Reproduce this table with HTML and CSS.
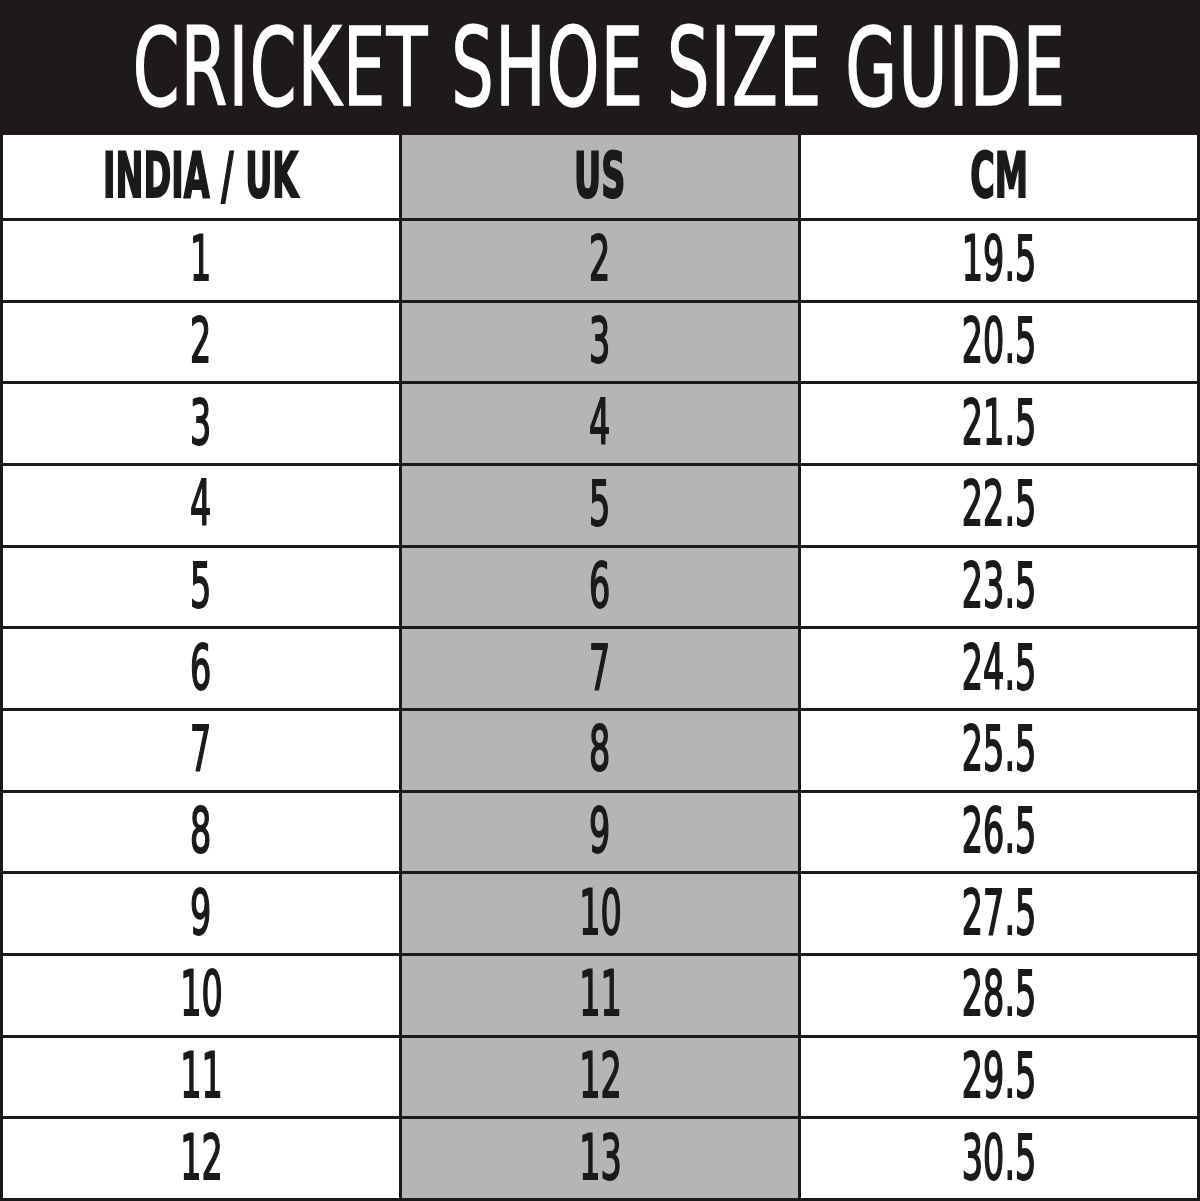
FILE: index.html
```html
<!DOCTYPE html>
<html lang="en">
<head>
<meta charset="utf-8">
<title>Cricket Shoe Size Guide</title>
<link rel="stylesheet" href="styles.css">
</head>
<body>
<div class="sheet">
  <header class="title-bar"><h1 class="title"><span class="squeeze-title">CRICKET SHOE SIZE GUIDE</span></h1></header>
  <div class="grid">
    <div class="cell head"><span class="sq">INDIA / UK</span></div>
    <div class="cell head grey"><span class="sq">US</span></div>
    <div class="cell head"><span class="sq">CM</span></div>

    <div class="cell"><span class="sq">1</span></div><div class="cell grey"><span class="sq">2</span></div><div class="cell"><span class="sq">19.5</span></div>
    <div class="cell"><span class="sq">2</span></div><div class="cell grey"><span class="sq">3</span></div><div class="cell"><span class="sq">20.5</span></div>
    <div class="cell"><span class="sq">3</span></div><div class="cell grey"><span class="sq">4</span></div><div class="cell"><span class="sq">21.5</span></div>
    <div class="cell"><span class="sq">4</span></div><div class="cell grey"><span class="sq">5</span></div><div class="cell"><span class="sq">22.5</span></div>
    <div class="cell"><span class="sq">5</span></div><div class="cell grey"><span class="sq">6</span></div><div class="cell"><span class="sq">23.5</span></div>
    <div class="cell"><span class="sq">6</span></div><div class="cell grey"><span class="sq">7</span></div><div class="cell"><span class="sq">24.5</span></div>
    <div class="cell"><span class="sq">7</span></div><div class="cell grey"><span class="sq">8</span></div><div class="cell"><span class="sq">25.5</span></div>
    <div class="cell"><span class="sq">8</span></div><div class="cell grey"><span class="sq">9</span></div><div class="cell"><span class="sq">26.5</span></div>
    <div class="cell"><span class="sq">9</span></div><div class="cell grey"><span class="sq">10</span></div><div class="cell"><span class="sq">27.5</span></div>
    <div class="cell"><span class="sq">10</span></div><div class="cell grey"><span class="sq">11</span></div><div class="cell"><span class="sq">28.5</span></div>
    <div class="cell"><span class="sq">11</span></div><div class="cell grey"><span class="sq">12</span></div><div class="cell"><span class="sq">29.5</span></div>
    <div class="cell"><span class="sq">12</span></div><div class="cell grey"><span class="sq">13</span></div><div class="cell"><span class="sq">30.5</span></div>
  </div>
</div>
</body>
</html>
```
FILE: styles.css
```css
html, body {
  margin: 0;
  padding: 0;
  background: #ffffff;
}

.sheet {
  width: 1200px;
  height: 1201px;
  box-sizing: border-box;
  border: 3px solid #1c1a19;
  border-top: 0;
  display: flex;
  flex-direction: column;
  overflow: hidden;
  font-family: "DejaVu Sans", sans-serif;
  font-stretch: condensed;
  color: #1a1a1a;
}

.title-bar {
  height: 135px;
  flex: none;
  background: #1e1a19;
  display: flex;
  align-items: center;
  justify-content: center;
  overflow: hidden;
}

.title {
  margin: 0;
  color: #ffffff;
  font-size: 108px;
  font-weight: normal;
  line-height: 1;
  letter-spacing: 2px;
  -webkit-text-stroke: 1.5px #ffffff;
  max-width: 1194px;
  display: flex;
  justify-content: center;
}

.squeeze-title {
  display: inline-block;
  flex: none;
  transform: scaleX(0.688);
  white-space: nowrap;
}

.grid {
  flex: 1;
  display: grid;
  grid-template-columns: repeat(3, 1fr);
  grid-template-rows: 83px repeat(12, 1fr);
  gap: 3px;
  background: #1c1a19;
}

.cell {
  background: #ffffff;
  display: flex;
  align-items: center;
  justify-content: center;
  font-size: 62px;
  font-weight: normal;
  line-height: 1;
  padding-bottom: 2px;
  overflow: hidden;
  -webkit-text-stroke: 1.8px #1a1a1a;
}

.cell.grey {
  background: #b4b6b5;
}

.cell.head {
  font-weight: bold;
  padding-bottom: 2px;
  -webkit-text-stroke: 2px #1a1a1a;
}

.sq {
  display: inline-block;
  transform: scaleX(0.6);
  white-space: nowrap;
}

.head .sq {
  transform: scaleX(0.6);
}
```
